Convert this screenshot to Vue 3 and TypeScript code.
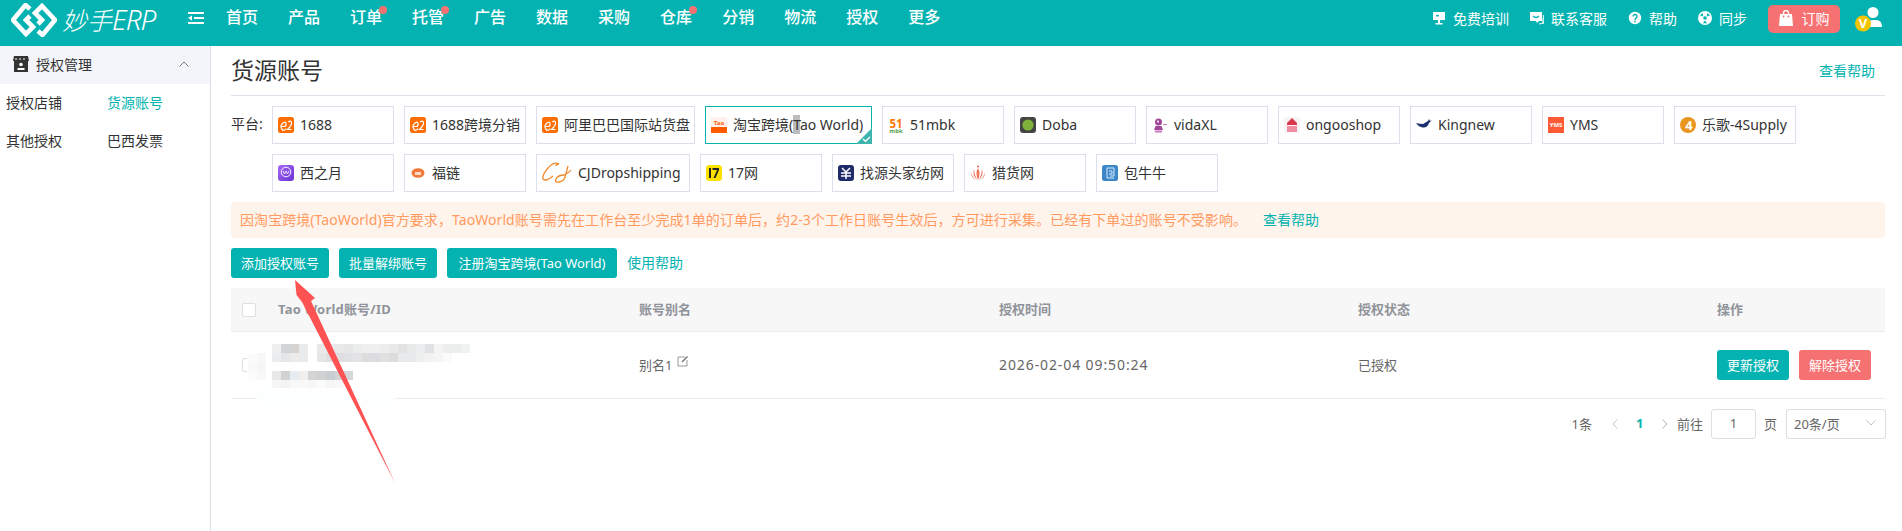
<script setup lang="ts">
const nav = [
  { t: '首页' }, { t: '产品' }, { t: '订单', dot: true }, { t: '托管', dot: true }, { t: '广告' }, { t: '数据' },
  { t: '采购' }, { t: '仓库', dot: true }, { t: '分销' }, { t: '物流' }, { t: '授权' }, { t: '更多' },
]
const tiles = [
  { id: 'a', t: '1688' }, { id: 'a', t: '1688跨境分销' }, { id: 'a', t: '阿里巴巴国际站货盘' },
  { id: 'tao', t: '' }, { id: '51', t: '51mbk' }, { id: 'doba', t: 'Doba' }, { id: 'vida', t: 'vidaXL' },
  { id: 'ongoo', t: 'ongooshop' }, { id: 'king', t: 'Kingnew' }, { id: 'yms', t: 'YMS' }, { id: 'lege', t: '乐歌-4Supply' },
  { id: 'xzy', t: '西之月' }, { id: 'fl', t: '福链' }, { id: 'cj', t: 'CJDropshipping' }, { id: '17', t: '17网' },
  { id: 'zy', t: '找源头家纺网' }, { id: 'lh', t: '猎货网' }, { id: 'bnn', t: '包牛牛' },
]
const mosaicRows = [
  { x: 272, y: 344, h: 9, c: ['f0f0f0', 'd2d5d8', 'd5d4d2', 'e8eaec'] },
  { x: 272, y: 353, h: 9, c: ['ecedee', 'e4e6e7', 'ecebe9', 'e8eaeb'] },
  { x: 317, y: 344, h: 9, c: ['e9e9ea', 'ebebec', 'e8e8e9', 'e6e6e7', 'ebecec', 'efefef', 'f0f0f0', 'ededed', 'e9e9ea', 'e3e3e4', 'e8eaea', 'ecedee', 'e0e1e4', 'f4f4f4', 'eceded', 'ecedee', 'f0f1f1'] },
  { x: 317, y: 353, h: 9, c: ['e6e6e7', 'dfdfe1', 'dedee0', 'e0e1e3', 'e3e3e5', 'dcdcdc', 'dadce0', 'e0e0e1', 'dcdcdd', 'e8e9ea', 'e6e8e9', 'eef0f0', 'f2f2f3', 'f5f5f6', 'fafafa'] },
  { x: 272, y: 371, h: 9, c: ['e8e8e8', 'd2d2d0', 'e6ecf0', 'f0efed', 'd5d3d3', 'cfd1d3', 'c8ced0', 'd4d4d6', 'd5d6d8'] },
  { x: 272, y: 380, h: 8, c: ['f6f6f6', 'f3f3f3', 'f8f8f8', 'f8f8f7', 'f5f6f6', 'fbfbfb', 'f5f6f6', 'f8f8f8'] },
  { x: 248, y: 353, h: 9, c: ['fbfbfb', 'f8f8f8'] },
  { x: 248, y: 362, h: 9, c: ['f9f9f9', 'f6f6f6'] },
  { x: 248, y: 371, h: 9, c: ['fcfcfc', 'f9f9f9'] },
]
</script>

<template>
  <div class="page">
    <header class="topbar">
      <svg class="logo" viewBox="0 0 46 34" width="46" height="34">
        <path d="M19 6 14.500 2 2 17 15 31 22 24 15 17 19 13" fill="none" stroke="#fff" stroke-width="4.600" />
        <path d="M27 28 31.500 32 44 17 31 3 24 10 31 17 27 21" fill="none" stroke="#fff" stroke-width="4.600" />
      </svg>
      <span class="brand">妙手<em>ERP</em></span>
      <svg class="burger" viewBox="0 0 16 12" width="16" height="12">
        <path d="M0 1h16M6 6h10M0 11h16" stroke="#fff" stroke-width="2" />
        <path d="M0 6 4 3.500v5z" fill="#fff" />
      </svg>
      <nav class="nav">
        <span v-for="n in nav" :key="n.t" class="nav-item">{{ n.t }}<i v-if="n.dot" class="dot"></i></span>
      </nav>
      <div class="tools">
        <span class="tool">
          <svg viewBox="0 0 14 14" width="14" height="14"><path d="M1 1h12v8H1z" fill="#fff" /><path d="M4 4h3v1.400H4z" fill="#04b3b1" /><path d="M6 9h2v3h2.500v1.500h-7V12H6z" fill="#fff" /></svg>
          免费培训
        </span>
        <span class="tool">
          <svg viewBox="0 0 14 14" width="14" height="14"><path d="M0 1h12v9H9l-2 2-1-2H0z" fill="#fff" /><path d="M13 4h1v9h-3l-1 1-1-2h3z" fill="#fff" opacity=".8" /><path d="M3 5q3 3 6 0" stroke="#04b3b1" fill="none" stroke-width="1.200" /></svg>
          联系客服
        </span>
        <span class="tool">
          <svg viewBox="0 0 14 14" width="14" height="14"><circle cx="7" cy="7" r="6.200" fill="#fff" /><path d="M5 5.500a2 2 0 1 1 3 1.700Q7 7.800 7 9" stroke="#04b3b1" fill="none" stroke-width="1.400" /><circle cx="7" cy="10.600" r=".9" fill="#04b3b1" /></svg>
          帮助
        </span>
        <span class="tool">
          <svg viewBox="0 0 14 14" width="14" height="14"><circle cx="7" cy="7" r="7" fill="#fff" /><circle cx="7" cy="7" r="1.800" fill="#04b3b1" /><path d="M1.800 4.200 4.800 2 5.200 5.400zM12.200 4.200 9.200 2 8.800 5.400zM4.800 12.200h4.400L7 9.400z" fill="#04b3b1" /></svg>
          同步
        </span>
        <button class="buy" type="button">
          <svg viewBox="0 0 14 16" width="14" height="16"><path d="M1 4h12l1 12H0z" fill="#fff" /><path d="M4.500 5V3a2.500 2.500 0 0 1 5 0v2" fill="none" stroke="#fff" stroke-width="1.300" /><circle cx="4.500" cy="6.500" r=".9" fill="#f67272" /><circle cx="9.500" cy="6.500" r=".9" fill="#f67272" /></svg>
          订购
        </button>
        <div class="avatar">
          <svg viewBox="0 0 28 26" width="28" height="26">
            <circle cx="18" cy="6.500" r="5.500" fill="#fff" />
            <path d="M11 21q0-7 7-7h3q6 0 6 7z" fill="#fff" />
            <circle cx="8" cy="17.500" r="8" fill="#f5c400" />
            <text x="8" y="22" text-anchor="middle" class="v">V</text>
          </svg>
        </div>
      </div>
    </header>

    <div class="body">
      <aside class="side">
        <div class="side-head">
          <svg viewBox="0 0 16 16" width="16" height="16">
            <path d="M1 0h14l1 5H0z" fill="#333" />
            <path d="M1 5h14v11H1z" fill="#333" />
            <path d="M2 3h2M6 3h2M10 3h2" stroke="#fff" stroke-width="1" />
            <circle cx="8" cy="8.500" r="1.800" fill="#fff" />
            <path d="M4.500 12h7v2h-7z" fill="#fff" />
          </svg>
          <span>授权管理</span>
          <svg class="chev" viewBox="0 0 10 6" width="10" height="6"><path d="M.5 5.500 5 1l4.500 4.500" fill="none" stroke="#777" /></svg>
        </div>
        <div class="side-items">
          <span>授权店铺</span><span class="on">货源账号</span>
          <span>其他授权</span><span>巴西发票</span>
        </div>
      </aside>

      <main class="main">
        <div class="title-row">
          <h1>货源账号</h1>
          <a class="link">查看帮助</a>
        </div>

        <div class="platforms">
          <span class="plat-label">平台:</span>
          <div class="plat-list">
            <div v-for="(p, i) in tiles" :key="i" class="tile" :class="{ picked: p.id === 'tao', wide: p.id === 'cj' }">
              <svg v-if="p.id === 'a'" viewBox="0 0 16 16" width="16" height="16">
                <rect width="16" height="16" rx="2.500" fill="#ff6d00" />
                <path d="M3 9.500h3.500Q8.500 9 8 6.500T5 6 3 10t2 3.500Q7 13.500 8 11.500M10 5q3-2 3.500.5T9.500 12.500h4" fill="none" stroke="#fff" stroke-width="1.200" />
              </svg>
              <svg v-else-if="p.id === 'tao'" viewBox="0 0 16 16" width="16" height="16">
                <rect width="16" height="16" fill="#fff1ec" />
                <text x="8" y="8" text-anchor="middle" class="tx-tao">Tao</text>
                <rect y="10" width="16" height="6" fill="#ff5a00" />
              </svg>
              <svg v-else-if="p.id === '51'" viewBox="0 0 16 16" width="16" height="16">
                <text x="8" y="10.500" text-anchor="middle" class="tx-51">51</text>
                <text x="8" y="15.800" text-anchor="middle" class="tx-mbk">mbk</text>
              </svg>
              <svg v-else-if="p.id === 'doba'" viewBox="0 0 16 16" width="16" height="16">
                <rect width="16" height="16" rx="3" fill="#444" /><circle cx="8" cy="8" r="5.600" fill="#7fb23a" />
              </svg>
              <svg v-else-if="p.id === 'vida'" viewBox="0 0 16 16" width="16" height="16">
                <circle cx="6.500" cy="5" r="3.500" fill="#a2469a" /><path d="M3.500 9h6l1.500 4H2z" fill="#a2469a" /><circle cx="6" cy="4.500" r="1" fill="#fff" />
                <path d="M3 13.500h7v2H3zM11 7h4v1h-4z" fill="#c57cbf" />
              </svg>
              <svg v-else-if="p.id === 'ongoo'" viewBox="0 0 16 16" width="16" height="16">
                <rect width="16" height="16" fill="#f8f4f5" /><path d="M8 1 13 6v2H3V6z" fill="#d7364f" /><path d="M3 9h10v6H3z" fill="#f08da0" />
              </svg>
              <svg v-else-if="p.id === 'king'" viewBox="0 0 16 16" width="16" height="16">
                <path d="M0 6q4 1 7 1l5-3 1-2 1 2 2-1-3 3q-2 6-8 4Q2 9 0 6z" fill="#1d2f6f" />
              </svg>
              <svg v-else-if="p.id === 'yms'" viewBox="0 0 16 16" width="16" height="16">
                <rect width="16" height="16" fill="#ff5a36" /><text x="8" y="10.300" text-anchor="middle" class="tx-yms">YMS</text>
              </svg>
              <svg v-else-if="p.id === 'lege'" viewBox="0 0 16 16" width="16" height="16">
                <circle cx="8" cy="8" r="8" fill="#e8961f" /><text x="9" y="13" text-anchor="middle" class="tx-4">4</text>
              </svg>
              <svg v-else-if="p.id === 'xzy'" viewBox="0 0 16 16" width="16" height="16">
                <defs><linearGradient id="xg" x1="0" y1="0" x2="1" y2="1"><stop offset="0" stop-color="#a46af0" /><stop offset="1" stop-color="#6a32d6" /></linearGradient></defs>
                <rect width="16" height="16" rx="3" fill="url(#xg)" />
                <circle cx="8" cy="7" r="4.800" fill="none" stroke="#fff" stroke-width=".9" />
                <path d="M5 6l1.500 3L8 6l1.500 3L11 6" fill="none" stroke="#fff" stroke-width=".8" />
              </svg>
              <svg v-else-if="p.id === 'fl'" viewBox="0 0 16 16" width="16" height="16">
                <ellipse cx="8" cy="8" rx="6.500" ry="4.800" fill="#f07a3c" /><path d="M5 7h6v3H5z" fill="#ffd9c4" />
              </svg>
              <svg v-else-if="p.id === 'cj'" class="cj" viewBox="0 0 30 24" width="30" height="24">
                <path d="M17 3Q12 0 6 7T1 18q3 3 10-3M17 3q-3 0-3 2" fill="none" stroke="#f28a2e" stroke-width="1.300" />
                <path d="M26 5q-2 7-3 11t-6 5-3-3 8-4q5-2 7-5" fill="none" stroke="#f28a2e" stroke-width="1.300" />
              </svg>
              <svg v-else-if="p.id === '17'" viewBox="0 0 16 16" width="16" height="16">
                <rect width="16" height="16" rx="3.500" fill="#ffe100" /><path d="M3 3h2v10H3zM6.500 3H13v2l-3.500 8h-2L11 5H6.500z" fill="#222" />
              </svg>
              <svg v-else-if="p.id === 'zy'" viewBox="0 0 16 16" width="16" height="16">
                <rect width="16" height="16" rx="3" fill="#1f2a68" /><path d="M4 3l4 4 4-4M3 8h10M3 11h10M8 7v7" fill="none" stroke="#fff" stroke-width="1.500" />
              </svg>
              <svg v-else-if="p.id === 'lh'" viewBox="0 0 16 16" width="16" height="16">
                <path d="M8 3Q5 8 8 15Q11 8 8 3zM4 4Q2 10 7 15Q4 9 4 4zM12 4q2 6-3 11q3-6 3-11zM1 7q0 6 5 8Q2 12 1 7zM15 7q0 6-5 8q4-3 5-8z" fill="#ee5a45" opacity=".85" />
                <circle cx="8" cy="1.500" r="1" fill="#ee5a45" />
              </svg>
              <svg v-else-if="p.id === 'bnn'" viewBox="0 0 16 16" width="16" height="16">
                <rect width="16" height="16" rx="2.500" fill="#3d87c9" /><path d="M5 3h7v8H8M5 3v10h7M7 6h3v3H7" fill="none" stroke="#d7ecfb" stroke-width="1" />
              </svg>
              <span v-if="p.id === 'tao'" class="tile-text">淘宝跨境(<span class="caret">T</span>ao World)</span>
              <span v-else class="tile-text">{{ p.t }}</span>
              <i v-if="p.id === 'tao'" class="corner">
                <svg viewBox="0 0 16 16" width="16" height="16"><path d="M16 0v16H0z" fill="#3fb4ae" /><path d="M7 11l2.500 2.300L14 9" fill="none" stroke="#fff" stroke-width="1.300" /></svg>
              </i>
            </div>
          </div>
        </div>

        <div class="alert">
          <span>因淘宝跨境(TaoWorld)官方要求，TaoWorld账号需先在工作台至少完成1单的订单后，约2-3个工作日账号生效后，方可进行采集。已经有下单过的账号不受影响。</span>
          <a class="link alert-link">查看帮助</a>
        </div>

        <div class="toolbar">
          <button class="btn" type="button">添加授权账号</button>
          <button class="btn" type="button">批量解绑账号</button>
          <button class="btn reg" type="button">注册淘宝跨境(Tao World)</button>
          <a class="link help">使用帮助</a>
        </div>

        <div class="table">
          <div class="tr th">
            <div class="cell-check"><i class="check"></i></div>
            <div class="idcol">Tao World账号/ID</div>
            <div>账号别名</div>
            <div>授权时间</div>
            <div>授权状态</div>
            <div>操作</div>
          </div>
          <div class="tr td">
            <div class="cell-check"><i class="check"></i></div>
            <div></div>
            <div class="alias">别名1
              <svg viewBox="0 0 12 12" width="12" height="12"><path d="M8 2H1v9h9V5" fill="none" stroke="#999" /><path d="M5 7 10.500 1.500" stroke="#777" stroke-width="1.500" /></svg>
            </div>
            <div class="time">2026-02-04 09:50:24</div>
            <div>已授权</div>
            <div class="ops">
              <button class="btn" type="button">更新授权</button>
              <button class="btn danger" type="button">解除授权</button>
            </div>
          </div>
        </div>

        <div class="pager">
          <span class="total">1条</span>
          <svg class="arrow" viewBox="0 0 6 10" width="6" height="10"><path d="M5.500.5 1 5l4.500 4.500" fill="none" stroke="#c0c4cc" /></svg>
          <span class="cur">1</span>
          <svg class="arrow next" viewBox="0 0 6 10" width="6" height="10"><path d="M.5.5 5 5 .5 9.500" fill="none" stroke="#b0b4bc" /></svg>
          <span>前往</span>
          <span class="box num">1</span>
          <span>页</span>
          <span class="box size">20条/页
            <svg viewBox="0 0 10 6" width="10" height="6"><path d="M.5.5 5 5 9.500.5" fill="none" stroke="#c0c4cc" /></svg>
          </span>
        </div>
      </main>
    </div>

    <svg class="overlay" viewBox="0 0 1902 531" width="1902" height="531">
      <rect x="257" y="385" width="138" height="22" rx="8" fill="#fdfefe" />
      <rect x="247" y="352" width="25" height="33" fill="#fff" />
      <rect x="272" y="338" width="200" height="52" fill="#fff" />
      <rect x="308" y="338" width="9" height="24" fill="#fff" />
      <template v-for="(r, i) in mosaicRows" :key="i">
        <rect v-for="(c, j) in r.c" :key="j" :x="r.x + j * 9" :y="r.y" width="9" :height="r.h" :fill="'#' + c" />
      </template>
      <polygon points="295,280 315,298 311,301 395,483 302,302 296.500,295" fill="#ff5252" />
    </svg>
  </div>
</template>

<style scoped>
.page {
  position: relative;
  width: 1902px;
  height: 531px;
  overflow: hidden;
  background: #fff;
  color: #333;
  font-family: "Noto Sans", "Noto Sans CJK SC", sans-serif;
  font-size: 14px;
}
.topbar {
  height: 46px;
  box-sizing: border-box;
  padding: 0 19px 10px 11px;
  background: #04b3b1;
  color: #fff;
  display: flex;
  align-items: center;
}
.logo { flex: none; margin-top: 3px; }
.brand {
  width: 126px;
  margin-left: 5px;
  margin-top: 2px;
  font-size: 25px;
  font-style: italic;
  font-weight: 300;
  white-space: nowrap;
}
.brand em { font-size: 28px; letter-spacing: -1px; }
.burger { flex: none; }
.nav { display: flex; gap: 30px; margin-left: 22px; padding-bottom: 2px; }
.nav-item { position: relative; font-size: 16px; line-height: 24px; font-weight: 500; }
.dot {
  position: absolute;
  top: 1px;
  right: -5px;
  width: 8px;
  height: 8px;
  border-radius: 50%;
  background: #f67272;
}
.tools { margin-left: auto; display: flex; align-items: center; gap: 21px; }
.tool { display: flex; align-items: center; gap: 7px; font-size: 14px; white-space: nowrap; padding-bottom: 1px; }
.buy {
  width: 72px;
  height: 28px;
  margin-top: 2px;
  padding: 0 0 2px;
  border: 0;
  border-radius: 5px;
  background: #f67272;
  color: #fff;
  font: inherit;
  font-size: 14px;
  display: flex;
  align-items: center;
  justify-content: center;
  gap: 9px;
}
.avatar { width: 28px; height: 26px; margin-left: -6px; margin-top: 2px; }
.v { font: 700 13px "Noto Sans", sans-serif; fill: #fff; }

.body { display: flex; height: 485px; }
.side { flex: none; width: 210px; border-right: 1px solid #dcdfe6; }
.side-head {
  height: 38px;
  box-sizing: border-box;
  padding: 0 21px 2px 13px;
  background: #f4f5fa;
  display: flex;
  align-items: center;
  gap: 7px;
}
.chev { margin-left: auto; }
.side-items {
  display: grid;
  grid-template-columns: 101px 1fr;
  grid-auto-rows: 38px;
  align-items: center;
  padding-left: 6px;
}
.side-items span { margin-bottom: 2px; }
.side-items .on { color: #04b3b1; }

.main { flex: 1; min-width: 0; padding: 0 17px 0 20px; }
.title-row {
  height: 50px;
  box-sizing: border-box;
  padding: 0 10px 2px 0;
  border-bottom: 1px solid #dfe1ea;
  display: flex;
  align-items: center;
  justify-content: space-between;
}
.title-row h1 { margin: 0; font-size: 23px; font-weight: 400; line-height: 30px; }
.link { color: #04b3b1; white-space: nowrap; }

.platforms { display: flex; margin-top: 10px; }
.plat-label { flex: none; width: 41px; line-height: 36px; }
.plat-list { display: flex; flex-wrap: wrap; gap: 10px; }
.tile {
  position: relative;
  box-sizing: border-box;
  min-width: 122px;
  height: 38px;
  padding: 0 4px 0 5px;
  border: 1px solid #dde0ea;
  display: flex;
  align-items: center;
  gap: 6px;
  white-space: nowrap;
}
.tile svg { flex: none; }
.tile.picked { border-color: #04b3b1; min-width: 167px; }
.tile.wide { min-width: 154px; }
.tile-text { margin-bottom: 2px; }
.caret { background: #bdbdbd; }
.corner { position: absolute; right: -1px; bottom: -1px; width: 16px; height: 16px; display: block; }
.tx-tao { font: 700 6px "Noto Sans", sans-serif; fill: #ff5a00; }
.tx-51 { font: 700 11.500px "Noto Sans", sans-serif; fill: #ff7a00; }
.tx-mbk { font: 700 6px "Noto Sans", sans-serif; fill: #5aa04a; }
.tx-yms { font: 700 6px "Noto Sans", sans-serif; fill: #fff; }
.tx-4 { font: 700 13px "Noto Sans", sans-serif; fill: #fff; }

.alert {
  height: 36px;
  box-sizing: border-box;
  margin-top: 10px;
  padding: 0 0 2px 9px;
  border-radius: 4px;
  background: #fff4ec;
  color: #ff9a60;
  display: flex;
  align-items: center;
  white-space: nowrap;
  letter-spacing: .07px;
}
.alert-link { margin-left: 16px; letter-spacing: 0; }

.toolbar { margin-top: 10px; display: flex; align-items: center; gap: 10px; }
.toolbar .help { margin-bottom: 2px; }
.btn {
  height: 30px;
  padding: 0 10px 2px;
  border: 0;
  border-radius: 3px;
  background: #04b3b1;
  color: #fff;
  font: inherit;
  font-size: 13px;
  white-space: nowrap;
}
.btn.reg { min-width: 170px; }
.btn.danger { background: #f67272; }

.table { margin-top: 10px; font-size: 13px; color: #666; }
.tr {
  display: grid;
  grid-template-columns: 47px 361px 360px 359px 359px 1fr;
  align-items: center;
  box-sizing: border-box;
  border-bottom: 1px solid #ebedf3;
}
.tr > div:not(.ops):not(.cell-check) { margin-bottom: 2px; }
.th { height: 44px; background: #f7f7f8; color: #909399; font-weight: 700; }
.idcol { letter-spacing: .2px; }
.td { height: 67px; }
.cell-check { padding-left: 11px; display: flex; }
.check {
  width: 14px;
  height: 14px;
  box-sizing: border-box;
  border: 1px solid #dcdfe6;
  border-radius: 2px;
  background: #fff;
}
.alias { display: flex; align-items: center; gap: 5px; }
.alias svg { margin-top: -6px; }
.time { font-size: 14px; letter-spacing: .9px; white-space: nowrap; }
.ops { display: flex; gap: 10px; }

.pager {
  height: 30px;
  margin-top: 10px;
  margin-right: -1px;
  display: flex;
  justify-content: flex-end;
  align-items: center;
  font-size: 13px;
  color: #666;
}
.pager > span:not(.box) { margin-bottom: 2px; }
.pager > .total { margin-right: 20px; }
.arrow { flex: none; margin-right: 18px; }
.arrow.next { margin-right: 9px; }
.pager > .cur { width: 5px; margin-right: 21px; color: #04b3b1; font-weight: 700; }
.box {
  box-sizing: border-box;
  height: 30px;
  border: 1px solid #dcdfe6;
  border-radius: 3px;
  display: flex;
  align-items: center;
  padding-bottom: 2px;
}
.num { width: 45px; margin: 0 8px; justify-content: center; }
.size { width: 100px; margin-left: 9px; padding: 0 9px 2px 7px; justify-content: space-between; white-space: nowrap; }

.overlay { position: absolute; left: 0; top: 0; pointer-events: none; }
</style>
